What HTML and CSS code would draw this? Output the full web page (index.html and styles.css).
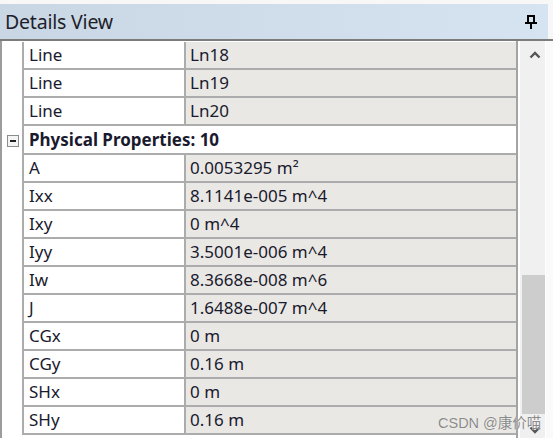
FILE: index.html
```html
<!DOCTYPE html>
<html>
<head>
<meta charset="utf-8">
<link rel="stylesheet" href="styles.css">
</head>
<body>
<div class="panel">
  <div class="titlebar">
    <span class="title">Details View</span>
    <svg class="pin" width="12" height="14" viewBox="0 0 12 14">
      <rect x="3" y="1" width="6" height="7" fill="none" stroke="#000" stroke-width="2"/>
      <rect x="0" y="7" width="12" height="2" fill="#000"/>
      <rect x="5" y="9" width="2" height="5" fill="#000"/>
    </svg>
  </div>
  <div class="body">
    <div class="grid">
      <div class="row"><div class="gut"></div><div class="name">Line</div><div class="val">Ln18</div></div>
      <div class="row"><div class="gut"></div><div class="name">Line</div><div class="val">Ln19</div></div>
      <div class="row"><div class="gut"></div><div class="name">Line</div><div class="val">Ln20</div></div>
      <div class="row group"><div class="gut"><span class="toggle"></span></div><div class="gname">Physical Properties: 10</div></div>
      <div class="row"><div class="gut"></div><div class="name">A</div><div class="val">0.0053295 m²</div></div>
      <div class="row"><div class="gut"></div><div class="name">Ixx</div><div class="val">8.1141e-005 m^4</div></div>
      <div class="row"><div class="gut"></div><div class="name">Ixy</div><div class="val">0 m^4</div></div>
      <div class="row"><div class="gut"></div><div class="name">Iyy</div><div class="val">3.5001e-006 m^4</div></div>
      <div class="row"><div class="gut"></div><div class="name">Iw</div><div class="val">8.3668e-008 m^6</div></div>
      <div class="row"><div class="gut"></div><div class="name">J</div><div class="val">1.6488e-007 m^4</div></div>
      <div class="row"><div class="gut"></div><div class="name">CGx</div><div class="val">0 m</div></div>
      <div class="row"><div class="gut"></div><div class="name">CGy</div><div class="val">0.16 m</div></div>
      <div class="row"><div class="gut"></div><div class="name">SHx</div><div class="val">0 m</div></div>
      <div class="row"><div class="gut"></div><div class="name">SHy</div><div class="val">0.16 m</div></div>
    </div>
    <div class="scrollbar">
      <svg class="arrow" width="12" height="8" viewBox="0 0 12 8">
        <path d="M1.5 6.5 L6 2 L10.5 6.5" fill="none" stroke="#555" stroke-width="2.4"/>
      </svg>
      <div class="track"><div class="thumb"></div></div>
      <svg class="arrow" width="12" height="8" viewBox="0 0 12 8">
        <path d="M1.5 1.5 L6 6 L10.5 1.5" fill="none" stroke="#555" stroke-width="2.4"/>
      </svg>
    </div>
    <div class="edge"></div>
  </div>
  <div class="watermark">CSDN @康价喵</div>
</div>
</body>
</html>
```
FILE: styles.css
```css
* { box-sizing: border-box; }
html, body {
  margin: 0;
  padding: 0;
  background: #ffffff;
}
body {
  width: 553px;
  height: 438px;
  overflow: hidden;
  font-family: "Noto Sans", "Open Sans", "Liberation Sans", "Noto Sans CJK SC", sans-serif;
  color: #1a1a2e;
}
.panel {
  position: relative;
  width: 553px;
  height: 438px;
  padding-top: 4px;
  background: #f7f7f7;
}
.titlebar {
  width: 548px;
  height: 35px;
  display: flex;
  align-items: center;
  justify-content: space-between;
  padding: 0 11px 0 5px;
  background: linear-gradient(to right, #c9d6e3, #d6e4f1);
}
.title {
  font-size: 19.5px;
  letter-spacing: -0.2px;
  color: #1e1e2a;
}
.pin { display: block; margin-top: 1px; }
.body {
  display: flex;
  border-top: 2px solid #7c7c7c;
  height: 399px;
  background: #ffffff;
}
.grid {
  width: 518px;
  border-left: 2px solid #9c9c9c;
  border-right: 2px solid #a4a4a4;
  padding-top: 1px;
}
.row {
  display: flex;
  height: 28px;
}
.gut {
  width: 20px;
  flex: none;
  display: flex;
  align-items: center;
  justify-content: center;
  background: #ffffff;
}
.name {
  width: 164px;
  flex: none;
  border-left: 2px solid #acacac;
  border-bottom: 2px solid #acacac;
  border-right: 2px solid #acacac;
  padding-left: 5px;
  font-size: 17px;
  line-height: 26px;
  background: #ffffff;
}
.val {
  flex: 1;
  border-bottom: 2px solid #acacac;
  padding-left: 4px;
  font-size: 17px;
  line-height: 26px;
  background: #e9e8e4;
}
.gname {
  flex: 1;
  border-left: 2px solid #acacac;
  border-bottom: 2px solid #acacac;
  padding-left: 5px;
  font-size: 17px;
  font-weight: bold;
  line-height: 27px;
  background: #ffffff;
}
.group { height: 29px; }
.toggle {
  position: relative;
  width: 12px;
  height: 12px;
  margin-left: 1px;
  border: 1px solid #8c8c8c;
  background: #f4f4f4;
}
.toggle::after {
  content: "";
  position: absolute;
  left: 2px;
  top: 4px;
  width: 6px;
  height: 2px;
  background: #222;
}
.scrollbar {
  width: 27px;
  padding-left: 2px;
  display: flex;
  flex-direction: column;
  align-items: center;
  background: #f0f0f0;
  border-left: 2px solid #ffffff;
}
.scrollbar .arrow { margin: 10px 0 8px 2px; }
.scrollbar .arrow:last-child { margin: 4px 0 4px 2px; }
.track {
  flex: 1;
  width: 25px;
  background: #f0f0f0;
  padding: 0 1px 8px;
  display: flex;
  flex-direction: column;
  justify-content: flex-end;
}
.thumb {
  height: 139px;
  background: #cdcdcd;
}
.edge {
  flex: 1;
  background: #fafafa;
  border-left: 1px solid #ffffff;
}
.watermark {
  position: absolute;
  left: 438px;
  top: 411px;
  font-family: "Liberation Sans", "Noto Sans CJK SC", sans-serif;
  font-size: 14.5px;
  color: #8a8a8a;
  text-shadow: 0 0 1px #ffffff;
}
```
